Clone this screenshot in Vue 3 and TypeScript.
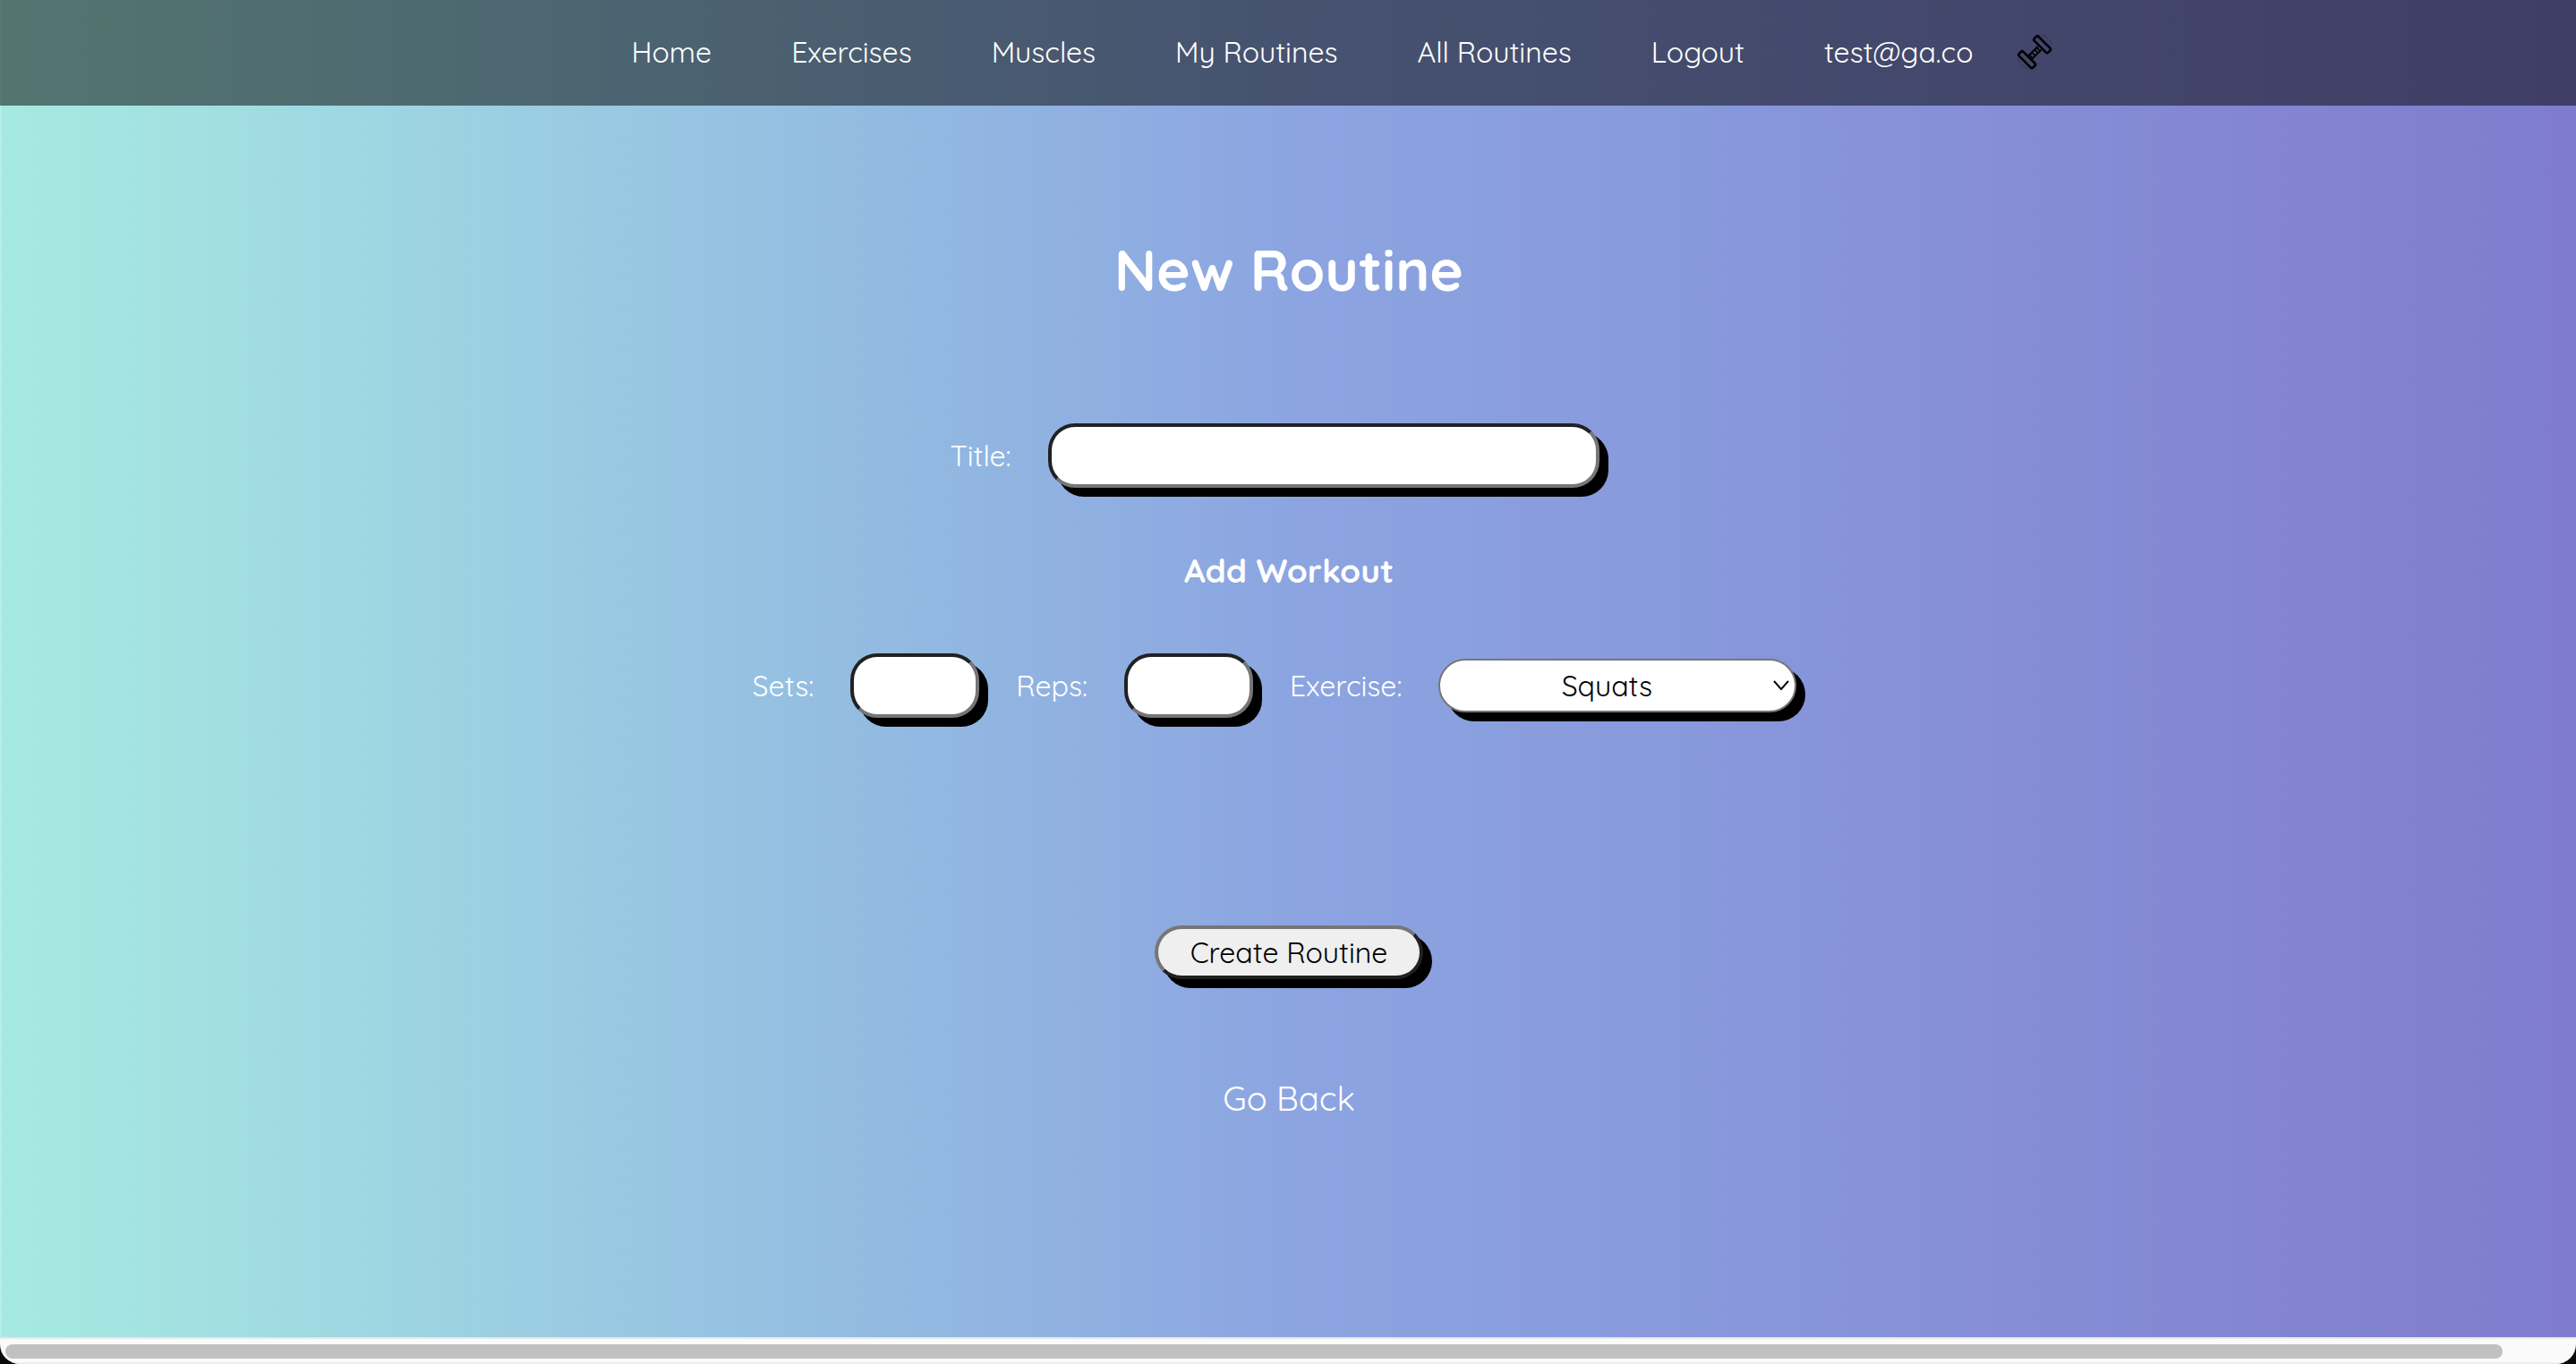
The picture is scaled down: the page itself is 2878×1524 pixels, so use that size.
<script setup lang="ts">
import { ref } from 'vue'

const links: string[] = ['Home', 'Exercises', 'Muscles', 'My Routines', 'All Routines', 'Logout', 'test@ga.co']
const exercises: string[] = ['Squats', 'Lunges', 'Deadlift', 'Bench Press']

const title = ref('')
const sets = ref('')
const reps = ref('')
const exercise = ref('Squats')
</script>

<template>
  <div class="window">
    <div class="page">
      <header class="topbar">
        <nav class="nav">
          <a v-for="link in links" :key="link" href="#">{{ link }}</a>
        </nav>
        <svg class="dumbbell" viewBox="219 113 120 120" aria-hidden="true">
          <g fill="none" stroke="#000" stroke-width="8" stroke-linejoin="round">
            <rect x="-33" y="-10" width="66" height="20" rx="6" transform="translate(305 148) rotate(45)" />
            <rect x="-33" y="-10" width="66" height="20" rx="6" transform="translate(254 199) rotate(45)" />
            <path d="M257 188L290 155M269 199L302 166" stroke-width="6" />
            <path d="M262 183L274 195M270 174L282 186M279 165L291 177M286 158L298 170" stroke-width="5" />
          </g>
          <g fill="none" stroke="#000" stroke-width="1" stroke-dasharray="4 1">
            <path d="M304 116Q311 116 316 121L331 136Q336 141 335 147" />
            <path d="M224 197Q224 205 229 210L243 223Q249 229 256 228" />
          </g>
        </svg>
      </header>

      <main class="content">
        <h1>New Routine</h1>
        <form class="form" @submit.prevent>
          <div class="row">
            <label for="title">Title:</label>
            <input id="title" v-model="title" class="wide" type="text" />
          </div>
          <h2>Add Workout</h2>
          <div class="row">
            <label for="sets">Sets:</label>
            <input id="sets" v-model="sets" class="short" type="text" />
            <label for="reps">Reps:</label>
            <input id="reps" v-model="reps" class="short" type="text" />
            <label for="exercise">Exercise:</label>
            <span class="picker">
              <select id="exercise" v-model="exercise">
                <option v-for="name in exercises" :key="name">{{ name }}</option>
              </select>
              <svg class="chevron" viewBox="0 0 18 12" aria-hidden="true">
                <path d="M1 1L9 10L17 1" fill="none" stroke="#000" stroke-width="2" />
              </svg>
            </span>
          </div>
          <button type="submit">Create Routine</button>
        </form>
        <a class="back" href="#">Go Back</a>
      </main>
    </div>
    <div class="scrollbar"><div class="thumb"></div></div>
  </div>
</template>

<style>
body {
  margin: 0;
  background: #0c0812;
}
</style>

<style scoped>
.window {
  display: flex;
  flex-direction: column;
  min-height: 100vh;
  overflow: hidden;
  border-radius: 0 0 22px 22px;
  background: #fafafa;
  color: #fff;
  font-family: Quicksand, Lato, sans-serif;
  font-size: 32px;
  line-height: 40px;
}

.page {
  flex: 1;
  box-shadow: inset 2px 0 rgba(255, 255, 255, 0.2);
  background: linear-gradient(90deg, #a6e9e2 0%, #a4e5e1 4%, #9acbe2 22%, #93bbe1 34%, #8ca5e1 50%, #8899dc 65%, #8385d2 88%, #7f7ccd 100%);
}

.topbar {
  display: flex;
  box-sizing: border-box;
  justify-content: center;
  align-items: center;
  gap: 48px;
  height: 118px;
  padding: 0 0 2px 120px;
  background: rgba(0, 0, 0, 0.5);
}

.nav {
  display: flex;
  gap: 89px;
}

a {
  color: inherit;
  text-decoration: none;
}

.dumbbell {
  width: 40px;
  height: 40px;
}

.content {
  display: flex;
  flex-direction: column;
  align-items: center;
  padding: 143px 0 80px 2px;
}

h1 {
  margin: 0 0 132px;
  font-size: 64px;
  line-height: 80px;
}

.form {
  display: flex;
  flex-direction: column;
  align-items: center;
}

.row {
  display: flex;
  align-items: center;
  gap: 41px;
  padding-right: 32px;
}

h2 {
  margin: 68px 0 69px;
  font-size: 37px;
  line-height: 48px;
}

input,
select,
button {
  box-sizing: border-box;
  border-radius: 30px;
  box-shadow: 10px 10px #000;
  color: #000;
  font: inherit;
  text-align: center;
}

input {
  height: 72px;
  padding: 0 20px;
  border: 4px solid;
  border-color: #212121 #767676 #767676 #212121;
  background: #fff;
}

.wide {
  width: 616px;
}

.short {
  width: 144px;
}

.picker {
  display: flex;
  position: relative;
}

select {
  width: 400px;
  height: 60px;
  padding: 0 24px 0 0;
  border: 2px solid #767676;
  appearance: none;
  background: #fff;
  text-align-last: center;
}

.chevron {
  position: absolute;
  top: 24px;
  right: 8px;
  width: 18px;
  height: 12px;
  pointer-events: none;
}

button {
  width: 300px;
  height: 60px;
  margin: 232px 0 109px;
  padding: 0;
  border: 4px solid;
  border-color: #767676 #212121 #212121 #767676;
  background: #efefef;
}

.back {
  font-size: 38px;
  line-height: 48px;
}

.scrollbar {
  box-sizing: border-box;
  height: 30px;
  padding: 6px 82px 6px 6px;
  border-top: 2px solid #e8e8e8;
  border-bottom: 2px solid #ededed;
}

.thumb {
  height: 16px;
  border-radius: 8px;
  background: #c1c1c1;
}
</style>
